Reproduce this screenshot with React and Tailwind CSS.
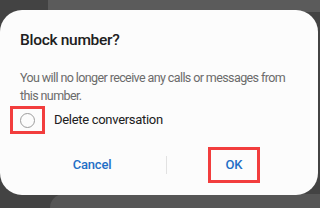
import React from "react";

export default function App() {
  return (
    <div className="relative w-[320px] h-[208px] overflow-hidden bg-[#434343]" style={{ fontFamily: "Roboto, 'Noto Sans', sans-serif" }}>
      {/* screen behind the dialog */}
      <div className="absolute left-[48px] top-0 right-0 h-[12px] bg-[#5b5b5b]" />
      <div className="absolute left-[50px] top-[194px] right-0 bottom-0 rounded-tl-[14px] bg-[#565656]" />

      <div className="relative mt-[10px] w-[318px] h-[185px] rounded-[22px] bg-[#fcfcfc] flex flex-col">
        <h1 className="pl-[20px] pt-[20px] text-[15.5px] leading-[20px] font-medium tracking-[-0.3px] text-[#202020]">Block number?</h1>

        <p className="mt-[19px] pl-[20px] pr-[18px] text-[12.5px] leading-[17.5px] tracking-[-0.6px] text-[#6b6b6b]">
          You will no longer receive any calls or messages from this number.
        </p>

        <div className="mt-[2px] flex items-center h-[28px]">
          <div className="ml-[10px] w-[35px] h-[28px] border-[3px] border-[#f23d3d] flex items-center justify-center">
            <div className="w-[15px] h-[15px] rounded-full border-[1.5px] border-[#9c9c9c]" />
          </div>
          <span className="ml-[9px] text-[13px] tracking-[-0.3px] text-[#202020]">Delete conversation</span>
        </div>

        <div className="mt-[13px] flex items-center h-[36px]">
          <button className="ml-[18px] w-[148px] h-full flex items-center justify-center text-[13px] font-medium tracking-[-0.2px] text-[#1f6fc6]">Cancel</button>
          <div className="w-px h-[18px] bg-[#e2e2e2]" />
          <div className="w-[134px] h-full flex items-center justify-center">
            <button className="w-[52px] h-[36px] border-[3px] border-[#f23d3d] flex items-center justify-center text-[13px] font-medium text-[#1f6fc6]">OK</button>
          </div>
        </div>
      </div>
    </div>
  );
}
